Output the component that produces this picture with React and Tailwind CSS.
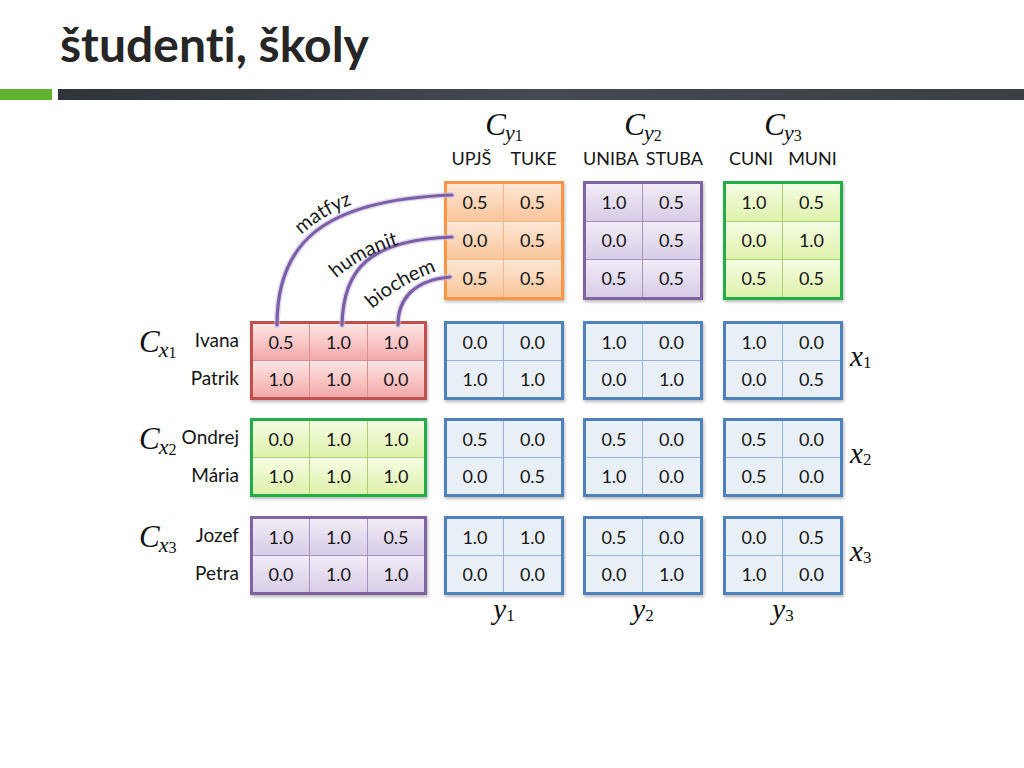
import React from "react";

const T = {
  orange: { box: "border-[#f79646] bg-[#f5b784]", cell: "bg-linear-to-b from-[#fde7d6] to-[#f9c59a]" },
  purple: { box: "border-[#8064a2] bg-[#a591c2]", cell: "bg-linear-to-b from-[#f1ecf7] to-[#d8cde7]" },
  green: { box: "border-[#22ad4a] bg-[#acd071]", cell: "bg-linear-to-b from-[#f6fce3] to-[#def2ab]" },
  red: { box: "border-[#c0504d] bg-[#dc8f8d]", cell: "bg-linear-to-b from-[#fde5e5] to-[#f2a9a9]" },
  blue: { box: "border-[#4f81bd] bg-[#93b4dc]", cell: "bg-[#e9eff6]" },
};

function Box({ theme, data, tall }) {
  const t = T[theme];
  const three = data[0].length === 3;
  return (
    <div
      className={`grid gap-px border-[3px] shadow-[1px_2px_3px_rgba(0,0,0,0.28)] ${t.box} ${
        three ? "grid-cols-[56px_57px_56px] w-[177px]" : "grid-cols-[56px_57px] w-[120px]"
      }`}
    >
      {data.flat().map((v, i) => (
        <div
          key={i}
          className={`${tall ? "h-[37px]" : "h-[36px]"} flex items-center justify-center text-[18px] text-[#151515] ${t.cell}`}
        >
          {v}
        </div>
      ))}
    </div>
  );
}

function CLabel({ sub, n }) {
  return (
    <div className="flex items-start font-['Liberation_Serif',serif] text-[#111] leading-none">
      <span className="italic text-[31px]">C</span>
      <span className="italic text-[22px] mt-[13px] -ml-[1px]">{sub}</span>
      <span className="text-[16px] mt-[19px]">{n}</span>
    </div>
  );
}

function XLabel({ v, n }) {
  return (
    <div className="flex items-start font-['Liberation_Serif',serif] text-[#111] leading-none">
      <span className="italic text-[29px]">{v}</span>
      <span className="text-[17px] mt-[12px]">{n}</span>
    </div>
  );
}

const topData = {
  orange: [["0.5", "0.5"], ["0.0", "0.5"], ["0.5", "0.5"]],
  purple: [["1.0", "0.5"], ["0.0", "0.5"], ["0.5", "0.5"]],
  green: [["1.0", "0.5"], ["0.0", "1.0"], ["0.5", "0.5"]],
};

const rows = [
  {
    n: "1",
    theme: "red",
    names: ["Ivana", "Patrik"],
    left: [["0.5", "1.0", "1.0"], ["1.0", "1.0", "0.0"]],
    blue: [
      [["0.0", "0.0"], ["1.0", "1.0"]],
      [["1.0", "0.0"], ["0.0", "1.0"]],
      [["1.0", "0.0"], ["0.0", "0.5"]],
    ],
  },
  {
    n: "2",
    theme: "green",
    names: ["Ondrej", "Mária"],
    left: [["0.0", "1.0", "1.0"], ["1.0", "1.0", "1.0"]],
    blue: [
      [["0.5", "0.0"], ["0.0", "0.5"]],
      [["0.5", "0.0"], ["1.0", "0.0"]],
      [["0.5", "0.0"], ["0.5", "0.0"]],
    ],
  },
  {
    n: "3",
    theme: "purple",
    names: ["Jozef", "Petra"],
    left: [["1.0", "1.0", "0.5"], ["0.0", "1.0", "1.0"]],
    blue: [
      [["1.0", "1.0"], ["0.0", "0.0"]],
      [["0.5", "0.0"], ["0.0", "1.0"]],
      [["0.0", "0.5"], ["1.0", "0.0"]],
    ],
  },
];

const heads = [
  { n: "1", a: "UPJŠ", b: "TUKE", theme: "orange", gap: "gap-[19px]" },
  { n: "2", a: "UNIBA", b: "STUBA", theme: "purple", gap: "gap-[7px]" },
  { n: "3", a: "CUNI", b: "MUNI", theme: "green", gap: "gap-[15px]" },
];

export default function App() {
  return (
    <div className="relative w-[1024px] h-[768px] bg-white overflow-hidden font-['Lato',sans-serif] text-[#151515] [font-variant-ligatures:none]">
      <div className="h-[89px] pl-[60px] pt-[20px] text-[48px] font-bold leading-none text-[#262626]">
        študenti, školy
      </div>
      <div className="flex h-[11px] gap-[6px]">
        <div className="w-[52px] bg-[#62b22f]" />
        <div className="flex-1 bg-linear-to-r from-[#2f333a] via-[#454a52] to-[#3a3e45]" />
      </div>

      <div className="grid grid-cols-[250px_194px_139px_140px_127px_1fr] grid-rows-[81px_140px_97px_98px_79px_auto]">
        {/* header row */}
        <div />
        <div />
        {heads.map((h) => (
          <div key={h.n} className="w-[120px] flex flex-col items-center pt-[9px]">
            <div className="h-[39px]">
              <CLabel sub="y" n={h.n} />
            </div>
            <div className={`flex justify-center whitespace-nowrap text-[18px] leading-[20px] text-[#151515] ${h.gap}`}>
              <span>{h.a}</span>
              <span>{h.b}</span>
            </div>
          </div>
        ))}
        <div />

        {/* top boxes row */}
        <div />
        <div />
        {heads.map((h) => (
          <div key={h.n}>
            <Box theme={h.theme} data={topData[h.theme]} tall />
          </div>
        ))}
        <div />

        {/* data rows */}
        {rows.map((r) => (
          <React.Fragment key={r.n}>
            <div className="flex">
              <div className="pl-[139px] pt-[5px]">
                <CLabel sub="x" n={r.n} />
              </div>
              <div className="ml-auto pr-[11px] flex flex-col items-end text-[19px]">
                <div className="h-[38px] flex items-center">{r.names[0]}</div>
                <div className="h-[38px] flex items-center">{r.names[1]}</div>
              </div>
            </div>
            <div>
              <Box theme={r.theme} data={r.left} />
            </div>
            {r.blue.map((b, i) => (
              <div key={i}>
                <Box theme="blue" data={b} />
              </div>
            ))}
            <div className="pt-[21px]">
              <XLabel v="x" n={r.n} />
            </div>
          </React.Fragment>
        ))}

        {/* y labels */}
        <div />
        <div />
        {heads.map((h) => (
          <div key={h.n} className="w-[120px] flex justify-center pt-[0px]">
            <XLabel v="y" n={h.n} />
          </div>
        ))}
        <div />
      </div>

      <svg
        className="absolute left-0 top-0 pointer-events-none"
        width="1024"
        height="768"
        viewBox="0 0 1024 768"
      >
        <defs>
          <path id="tp1" d="M 290 247 Q 320 212 368 199" />
          <path id="tp2" d="M 327 287 Q 359 254 411 241" />
          <path id="tp3" d="M 363 318 Q 395 284 449 267" />
        </defs>
        <g fill="none" strokeLinecap="round">
          <path d="M 277 325 C 277 245, 320 200, 452 195" stroke="#c9bbe0" strokeWidth="6" opacity="0.6" />
          <path d="M 342 325 C 343 270, 368 240, 452 237" stroke="#c9bbe0" strokeWidth="6" opacity="0.6" />
          <path d="M 398 325 C 398 298, 415 280, 450 277" stroke="#c9bbe0" strokeWidth="6" opacity="0.6" />
          <path d="M 277 325 C 277 245, 320 200, 452 195" stroke="#7a5fa6" strokeWidth="3.2" />
          <path d="M 342 325 C 343 270, 368 240, 452 237" stroke="#7a5fa6" strokeWidth="3.2" />
          <path d="M 398 325 C 398 298, 415 280, 450 277" stroke="#7a5fa6" strokeWidth="3.2" />
        </g>
        <g fontFamily="Lato, sans-serif" fontSize="20" fill="#1a1a1a">
          <text>
            <textPath href="#tp1" startOffset="50%" textAnchor="middle">matfyz</textPath>
          </text>
          <text>
            <textPath href="#tp2" startOffset="50%" textAnchor="middle">humanit</textPath>
          </text>
          <text>
            <textPath href="#tp3" startOffset="50%" textAnchor="middle">biochem</textPath>
          </text>
        </g>
      </svg>
    </div>
  );
}
